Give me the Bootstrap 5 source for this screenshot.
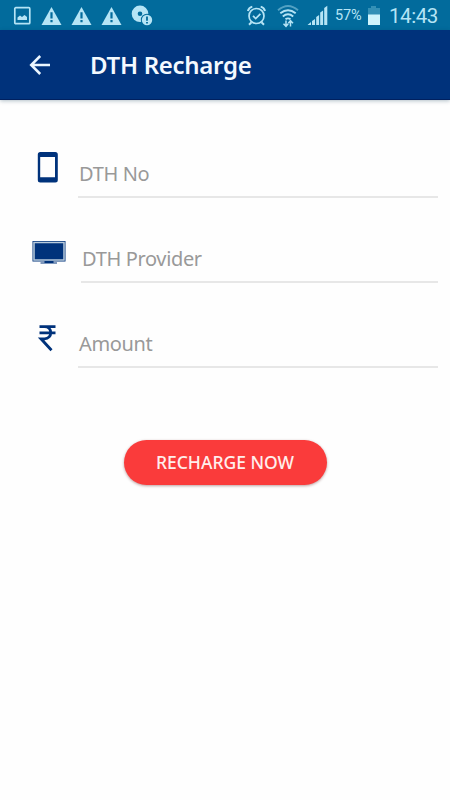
<!DOCTYPE html>
<html lang="en">
<head>
<meta charset="utf-8">
<meta name="viewport" content="width=device-width, initial-scale=1">
<title>DTH Recharge</title>
<link href="https://cdn.jsdelivr.net/npm/bootstrap@5.3.0/dist/css/bootstrap.min.css" rel="stylesheet">
<style>
body{font-family:"Noto Sans","Open Sans",sans-serif;background:#fefefe;min-height:800px;overflow:hidden}
svg{display:block;flex:none}
.status{height:30px;background:#026b9c;color:#b5e4f5;font-family:Roboto,sans-serif;padding:1px 12px 0 12px}
.notices{gap:9px}
.pct{font-size:14.5px;line-height:28px;width:28px;white-space:nowrap;margin-left:7px;letter-spacing:-.1px}
.clock{font-size:20.5px;line-height:28px;width:49px;white-space:nowrap;margin-left:8px;letter-spacing:-.45px}
.appbar{height:70px;background:#00327b;border-bottom:1px solid #00205f;box-shadow:0 1px 4px rgba(0,50,75,.3);padding-left:28px}
.title{font-size:24px;font-weight:600;line-height:34px;letter-spacing:-.3px;margin:0 0 0 38px;color:#f3f9ff;white-space:nowrap}
.recharge{padding:48px 12px 0 32px}
.field{height:50px;margin-bottom:35px}
.glyph{width:34px;height:38px;color:#00327b}
.entry{border-bottom:2px solid #e7e7e7;color:#999;font-size:20px;line-height:28px;letter-spacing:-.35px;padding:12px 0 0 1px;margin-left:12px;white-space:nowrap}
.entry.wide{margin-left:15px}
.submit{width:203px;height:45px;background:#fa3b3b;color:#ffeeec;font-size:17.5px;font-weight:500;line-height:24px;box-shadow:0 1px 3px rgba(80,0,0,.38);margin:72px auto 0 92px;padding:0 1px 2px 0;white-space:nowrap}
.submit:hover{background:#e93434;color:#fff}
</style>
<script src="https://cdn.jsdelivr.net/npm/bootstrap@5.3.0/dist/js/bootstrap.bundle.min.js"></script>
</head>
<body>
<div class="status d-flex align-items-center">
  <div class="notices d-flex align-items-center">
    <svg width="20" height="22" viewBox="0 0 20 22"><rect x="2.8" y="2.7" width="15" height="16" rx="1" fill="none" stroke="currentColor" stroke-width="1.7"/><path d="M5.500 15v-2.500l2.500-2 2 1.500 2.500-2 2.500 2V15z" fill="currentColor"/></svg>
    <svg width="21" height="22" viewBox="0 0 21 22"><path d="M10.5 2 20.5 20H.5z" fill="currentColor"/><path d="M10.5 7.3v6.2M10.5 15v2.3" stroke="#026b9c" stroke-width="2.2"/></svg>
    <svg width="21" height="22" viewBox="0 0 21 22"><path d="M10.5 2 20.5 20H.5z" fill="currentColor"/><path d="M10.5 7.3v6.2M10.5 15v2.3" stroke="#026b9c" stroke-width="2.2"/></svg>
    <svg width="21" height="22" viewBox="0 0 21 22"><path d="M10.5 2 20.5 20H.5z" fill="currentColor"/><path d="M10.5 7.3v6.2M10.5 15v2.3" stroke="#026b9c" stroke-width="2.2"/></svg>
    <svg width="22" height="22" viewBox="0 0 22 22"><circle cx="9" cy="8.8" r="8.3" fill="currentColor"/><circle cx="9" cy="8.8" r="2.3" fill="#026b9c"/><circle cx="16" cy="15" r="6.2" fill="#026b9c"/><circle cx="16" cy="15" r="5.2" fill="currentColor"/><path d="M16 11.500v4.300M16 16.900v1.600" stroke="#026b9c" stroke-width="1.8"/></svg>
  </div>
  <div class="ms-auto d-flex align-items-center">
    <svg width="20" height="22" viewBox="0 0 20 22" fill="none" stroke="currentColor"><circle cx="10.500" cy="11" r="7.500" stroke-width="1.7"/><path d="m7 10.900 2.700 2.600 4.700-4.700" stroke-width="1.7"/><path d="M1.900 5.900A6 6 0 0 1 6.300 1.600M14.700 1.600a6 6 0 0 1 4.300 4.300M5.500 17.300 3 19.800M15.500 17.300l2.500 2.500" stroke-width="2"/></svg>
    <svg class="ms-2" width="25" height="24" viewBox="0 0 25 24" fill="none" stroke="currentColor" stroke-width="1.900"><path d="M4 6.300q10-8.500 20 0" opacity=".45"/><path d="M6.300 9.300q7.700-6.300 15.400 0M8.800 12.500q5.200-4.300 10.400 0M11.500 15.300q2.500-1.800 5 0"/><path d="M12 16.500v5.500M9.500 19.800l2.500 2.500 2.200-2.500M16.500 22.500V17M14.300 19.200l2.200-2.500 2.500 2.500" stroke-width="1.5"/></svg>
    <svg class="ms-2" width="21" height="22" viewBox="0 0 21 22" fill="currentColor"><path d="M.5 20 4 17v3zM5 16l3-2v6H5zM9.200 12l2.900-2v10H9.200zM13.200 7.500l2.900-2V20h-2.900zM17.200 3 20.300.8V20h-3.100z"/></svg>
    <div class="pct">57%</div>
    <svg class="ms-1" width="14" height="22" viewBox="0 0 14 22"><path d="M4 1h5v2h4v7H1V3h3z" fill="#3490b6"/><path d="M1 9.500h12V20H1z" fill="#d0f4fc"/></svg>
    <div class="clock">14:43</div>
  </div>
</div>
<header class="appbar d-flex align-items-center">
  <svg width="24" height="24" viewBox="0 0 24 24" fill="none" stroke="#eaf6ff" stroke-width="2.5"><path d="M22 12H4M12.2 3 3.2 12l9 9"/></svg>
  <h1 class="title">DTH Recharge</h1>
</header>
<main class="recharge">
  <div class="field d-flex">
    <div class="glyph"><svg width="34" height="38" viewBox="0 0 34 38"><path fill="currentColor" fill-rule="evenodd" d="M8.300 4h15a2.500 2.500 0 0 1 2.500 2.500v25.500a2.500 2.500 0 0 1-2.500 2.500h-15a2.500 2.500 0 0 1-2.500-2.500v-25.500A2.500 2.500 0 0 1 8.300 4zM8.200 9v20.300h14.800V9z"/></svg></div>
    <div class="entry flex-grow-1">DTH No</div>
  </div>
  <div class="field d-flex">
    <div class="glyph"><svg width="34" height="38" viewBox="0 0 34 38"><rect x=".5" y="8" width="33" height="20.500" fill="currentColor"/><rect x="2" y="9.500" width="30" height="17.500" fill="none" stroke="#b9cbdc" stroke-width="1.500"/><path d="M12.500 28h9v1.500h3.500V30.500H8.500v-1h4z" fill="currentColor"/></svg></div>
    <div class="entry wide flex-grow-1">DTH Provider</div>
  </div>
  <div class="field d-flex">
    <div class="glyph"><svg width="34" height="38" viewBox="0 0 34 38" fill="none" stroke="currentColor" stroke-width="2.800"><path d="M7.500 8.600h16M7.500 14.800h16M7.500 8.600h5c8.300 0 8.300 12.200 0 12.200H9l10.500 11.500"/></svg></div>
    <div class="entry flex-grow-1">Amount</div>
  </div>
  <button type="button" class="submit btn rounded-pill border-0 d-flex align-items-center justify-content-center">RECHARGE NOW</button>
</main>
</body>
</html>
